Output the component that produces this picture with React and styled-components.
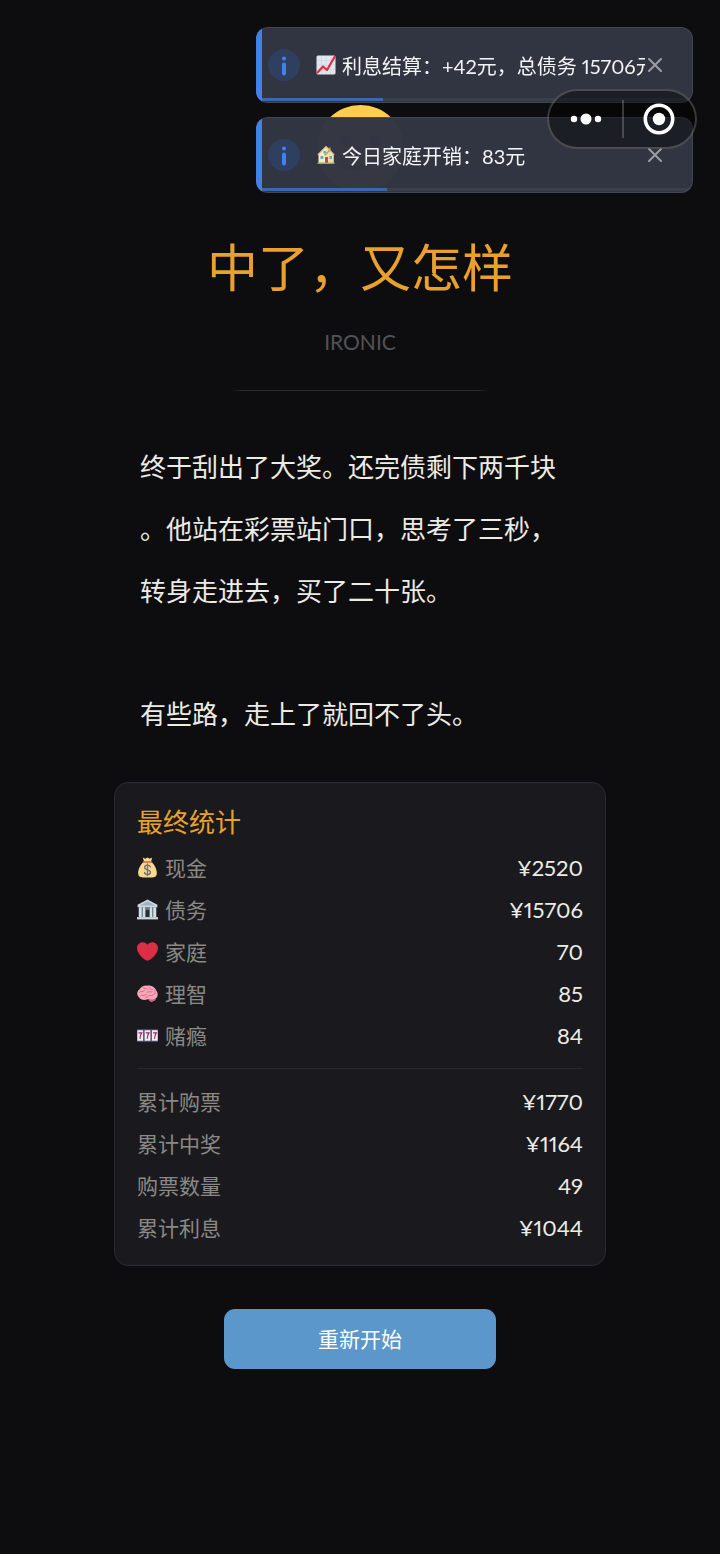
import React, { useState } from "react";
import styled, { createGlobalStyle } from "styled-components";

const GlobalStyle = createGlobalStyle`
  * {
    box-sizing: border-box;
  }

  body {
    margin: 0;
    background: #0d0d0f;
    color: #ecebe6;
    font-family: Lato, "Noto Sans CJK SC", sans-serif;
    font-variant-numeric: proportional-nums;
    text-spacing-trim: space-all;
  }

  button {
    font: inherit;
    border: none;
    cursor: pointer;
  }
`;

const Page = styled.main`
  display: flex;
  flex-direction: column;
  align-items: center;
  min-height: 100vh;
  padding: 105px 114px 60px;
`;

const Face = styled.svg`
  width: 87px;
  height: 87px;
`;

const Title = styled.h1`
  margin: 40px 0 0;
  color: #e8a22c;
  font-size: 51px;
  font-weight: 400;
  line-height: 72px;
`;

const Subtitle = styled.div`
  margin-top: 22px;
  color: #525254;
  font-size: 21px;
  line-height: 32px;
`;

const Rule = styled.hr`
  width: 260px;
  height: 1px;
  margin: 32px 0 0;
  border: none;
  background: linear-gradient(90deg, transparent, #2c2c2f 5%, #2c2c2f 95%, transparent);
`;

const Story = styled.div`
  width: 100%;
  margin-top: 45px;
  padding: 0 26px;
  font-size: 26px;
  line-height: 62px;
  line-break: anywhere;

  p {
    margin: 0 0 61px;
  }

  p:last-child {
    margin: 0;
  }
`;

const Card = styled.section`
  width: 100%;
  margin-top: 37px;
  padding: 19px 22px 17px;
  background: #1a1a1e;
  border: 1px solid #2b2b2f;
  border-radius: 14px;
`;

const CardTitle = styled.h2`
  margin: 0;
  color: #e8a22c;
  font-size: 26px;
  font-weight: 400;
  line-height: 40px;
`;

const StatList = styled.dl`
  margin: 0;
  padding: ${({ $divided }) => ($divided ? "11px 0 0" : "4px 0 12px")};
  border-top: ${({ $divided }) => ($divided ? "1px solid #2b2b2f" : "none")};
`;

const StatRow = styled.div`
  display: flex;
  align-items: center;
  justify-content: space-between;
  height: 42px;
`;

const StatLabel = styled.dt`
  display: flex;
  align-items: center;
  gap: 7px;
  color: #8b8985;
  font-size: 21px;
`;

const StatValue = styled.dd`
  margin: 0;
  font-size: 22px;
`;

const Emoji = styled.svg`
  flex: none;
  width: ${({ $size }) => $size || 21}px;
  height: ${({ $size }) => $size || 21}px;
`;

const RestartButton = styled.button`
  min-width: 272px;
  height: 60px;
  margin-top: 43px;
  padding: 0 20px 3px;
  color: #fff;
  background: #5b97ca;
  border-radius: 11px;
  font-size: 21px;
`;

const ToastStack = styled.div`
  position: fixed;
  top: 27px;
  right: 27px;
  display: flex;
  flex-direction: column;
  gap: 14px;
  width: 437px;
  max-width: calc(100vw - 54px);
`;

const ToastBox = styled.div`
  position: relative;
  display: flex;
  align-items: center;
  height: 76px;
  padding: 0 28px 0 12px;
  overflow: hidden;
  background: rgba(50, 54, 67, 0.985);
  border-radius: 12px;
  box-shadow: inset 0 0 0 1px rgba(255, 255, 255, 0.09);

  &::before {
    content: "";
    position: absolute;
    top: 0;
    bottom: 0;
    left: 0;
    width: 6px;
    background: #4381ea;
  }
`;

const InfoIcon = styled.svg`
  flex: none;
  width: 32px;
  height: 32px;
  margin-right: 16px;
`;

const ToastText = styled.div`
  display: flex;
  flex: 1;
  align-items: center;
  gap: 6px;
  overflow: hidden;
  color: #f3f4f6;
  font-size: 20px;
  white-space: nowrap;
`;

const CloseButton = styled.button`
  flex: none;
  display: flex;
  align-items: center;
  justify-content: center;
  width: 20px;
  height: 28px;
  padding: 0;
  background: none;
`;

const Progress = styled.div`
  position: absolute;
  right: 0;
  bottom: 2px;
  left: 6px;
  height: 3px;
  background: rgba(255, 255, 255, 0.05);

  div {
    height: 100%;
    background: #3f66ac;
  }
`;

const Capsule = styled.div`
  position: fixed;
  top: 89px;
  right: 23px;
  display: flex;
  align-items: center;
  width: 150px;
  height: 60px;
  background: rgba(0, 0, 0, 0.42);
  border: 2px solid rgba(255, 255, 255, 0.2);
  border-radius: 30px;
`;

const CapsuleButton = styled.button`
  display: flex;
  flex: 1;
  align-items: center;
  justify-content: center;
  height: 100%;
  padding: 0;
  background: none;

  & + & {
    position: relative;
  }

  & + &::before {
    content: "";
    position: absolute;
    left: 0;
    width: 2px;
    height: 38px;
    background: rgba(255, 255, 255, 0.2);
  }
`;

const ChartEmoji = () => (
  <Emoji viewBox="0 0 20 20" $size={20} aria-hidden="true">
    <rect x="0.5" y="0.5" width="19" height="19" rx="1.5" fill="#e1e8ed" />
    <path d="M5.5 1v18M10 1v18M14.5 1v18M1 5.500h18M1 10h18M1 14.500h18" stroke="#c6d3de" strokeWidth="0.6" />
    <path d="M1.500 17.500l5.500-6 4 3.500L18.500 2" fill="none" stroke="#dd2e44" strokeWidth="2.200" strokeLinecap="round" strokeLinejoin="round" />
  </Emoji>
);

const HouseEmoji = () => (
  <Emoji viewBox="0 0 20 20" $size={20} aria-hidden="true">
    <path d="M2.500 9L7 4.500 10 1.500 17.500 9v9.500h-15z" fill="#f8ecc0" />
    <path d="M10 1.500L17.500 9v9.500H10z" fill="#f3dfa6" />
    <path d="M12.500 2.500h2.200v4h-2.200z" fill="#a98c5c" />
    <path d="M1.800 9.800L10 1.500l8.200 8.300" fill="none" stroke="#dcc48a" strokeWidth="1.200" />
    <path d="M8.500 10.500L13 6" stroke="#b59a5f" strokeWidth="1.200" />
    <rect x="9" y="12" width="3" height="6" fill="#b5504a" />
    <path d="M4.500 11h2.800v3H4.500zM13.500 11h2.500v3h-2.500zM7.500 6h2.500v2.500H7.500z" fill="#6aa5cf" />
    <path d="M1.500 17.500h17v1.500h-17z" fill="#8fae55" />
  </Emoji>
);

const MoneyEmoji = () => (
  <Emoji viewBox="0 0 36 36" aria-hidden="true">
    <path d="M10 1l4 2 4-2 4 2 4-2-2 7c5 3 10 12 10 19 0 6-3 8-8 8H10c-5 0-8-2-8-8 0-7 5-16 10-19z" fill="#fdd888" />
    <path d="M11 8.500h14" stroke="#bf6952" strokeWidth="2.500" strokeLinecap="round" />
    <path d="M23 17c-1-2-3-3-5-3-3 0-5 1.500-5 4 0 5.500 10 2.500 10 8 0 2.500-2 4-5 4s-5-1.500-5-3.500M18 12v20" fill="none" stroke="#67757f" strokeWidth="2.300" strokeLinecap="round" />
  </Emoji>
);

const BankEmoji = () => (
  <Emoji viewBox="0 0 36 36" aria-hidden="true">
    <path d="M4 14h28v18H4z" fill="#66757f" />
    <path d="M18 1L1 10v4h34v-4z" fill="#ccd6dd" />
    <path d="M18 4L5 11h26z" fill="#9fb3c1" />
    <path d="M3 14h5v17H3zM10 14h4v17h-4zM22 14h4v17h-4zM28 14h5v17h-5z" fill="#d5dfe6" />
    <path d="M15 19h6v12h-6z" fill="#292f33" />
    <path d="M0 31h36v4H0z" fill="#ccd6dd" />
  </Emoji>
);

const HeartEmoji = () => (
  <Emoji viewBox="0 0 36 36" aria-hidden="true">
    <path d="M36 11.800c0-5.400-4.400-9.800-9.800-9.800-3.400 0-6.500 1.800-8.200 4.500C16.300 3.800 13.200 2 9.800 2 4.400 2 0 6.400 0 11.800c0 .8.100 1.500.3 2.200C1.700 22.600 11.200 31.600 18 34c6.800-2.400 16.300-11.400 17.700-20 .2-.7.300-1.400.3-2.200z" fill="#dd2e44" />
  </Emoji>
);

const BrainEmoji = () => (
  <Emoji viewBox="0 0 36 36" aria-hidden="true">
    <path d="M19 28c2 4 7 6 9 3 4 0 5-4 3-7z" fill="#dd5c83" />
    <path d="M3 24C-1 20 0 14 4 11 7 6 12 4 17 4.500 24 3 31 7 33 13c4 5 3 12-2 14-4 2-8 1-11 0-4 3-14 3-17-3z" fill="#f7a9bb" />
    <path d="M4 16c3-3 6 0 9-3M10 8c2 2 6 0 8 3M22 7c-2 3 2 5 5 4M17 16c3-3 6 1 9-1M6 22c3-3 6 1 10-2M20 22c3-2 7 1 10-3M14 26c1-2 4-2 5-3M30 12c2 2 0 4 1 6" fill="none" stroke="#dd5c83" strokeWidth="1.500" strokeLinecap="round" />
  </Emoji>
);

const SlotEmoji = () => (
  <Emoji viewBox="0 0 36 36" aria-hidden="true">
    <path d="M0 7h36v22H0z" fill="#4a4d66" />
    {[0, 12.5, 25].map((x) => (
      <g key={x} transform={`translate(${x} 0)`}>
        <rect x="0.500" y="9" width="10" height="18" fill="#f1edf5" />
        <path d="M2.500 13.500h5.500c-1.800 3-2.800 6-3 10" fill="none" stroke="#a0235f" strokeWidth="2" />
      </g>
    ))}
  </Emoji>
);

const mainStats = [
  { icon: <MoneyEmoji />, label: "现金", value: "¥2520" },
  { icon: <BankEmoji />, label: "债务", value: "¥15706" },
  { icon: <HeartEmoji />, label: "家庭", value: "70" },
  { icon: <BrainEmoji />, label: "理智", value: "85" },
  { icon: <SlotEmoji />, label: "赌瘾", value: "84" },
];

const totalStats = [
  { label: "累计购票", value: "¥1770" },
  { label: "累计中奖", value: "¥1164" },
  { label: "购票数量", value: "49" },
  { label: "累计利息", value: "¥1044" },
];

const initialToasts = [
  { id: 1, icon: <ChartEmoji />, text: "利息结算：+42元，总债务 15706元", progress: 28 },
  { id: 2, icon: <HouseEmoji />, text: "今日家庭开销：83元", progress: 29 },
];

function Stats({ items, divided }) {
  return (
    <StatList $divided={divided}>
      {items.map(({ icon, label, value }) => (
        <StatRow key={label}>
          <StatLabel>
            {icon}
            {label}
          </StatLabel>
          <StatValue>{value}</StatValue>
        </StatRow>
      ))}
    </StatList>
  );
}

function Toast({ icon, text, progress, onClose }) {
  return (
    <ToastBox role="status">
      <InfoIcon viewBox="0 0 32 32" aria-hidden="true">
        <circle cx="16" cy="16" r="16" fill="#2f3f60" />
        <circle cx="16" cy="9.500" r="2" fill="#4381ea" />
        <path d="M16 15.500v9" stroke="#4381ea" strokeWidth="4" strokeLinecap="round" />
      </InfoIcon>
      <ToastText>
        {icon}
        {text}
      </ToastText>
      <CloseButton type="button" aria-label="关闭" onClick={onClose}>
        <svg width="14" height="14" viewBox="0 0 14 14">
          <path d="M1 1l12 12M13 1L1 13" stroke="#9b9da4" strokeWidth="2" strokeLinecap="round" />
        </svg>
      </CloseButton>
      <Progress>
        <div style={{ width: `${progress}%` }} />
      </Progress>
    </ToastBox>
  );
}

function App() {
  const [toasts, setToasts] = useState(initialToasts);

  return (
    <>
      <GlobalStyle />
      <Page>
        <Face viewBox="0 0 36 36" aria-hidden="true">
          <circle cx="18" cy="18" r="18" fill="#ffcc4d" />
          <circle cx="12" cy="15" r="2.500" fill="#664500" />
          <circle cx="24" cy="15" r="2.500" fill="#664500" />
          <path d="M11 25c5 2 10 1 14-3" fill="none" stroke="#664500" strokeWidth="2" strokeLinecap="round" />
        </Face>
        <Title>中了，又怎样</Title>
        <Subtitle>IRONIC</Subtitle>
        <Rule />
        <Story>
          <p>终于刮出了大奖。还完债剩下两千块。他站在彩票站门口，思考了三秒，转身走进去，买了二十张。</p>
          <p>有些路，走上了就回不了头。</p>
        </Story>
        <Card>
          <CardTitle>最终统计</CardTitle>
          <Stats items={mainStats} />
          <Stats items={totalStats} divided />
        </Card>
        <RestartButton type="button">重新开始</RestartButton>
      </Page>

      <ToastStack>
        {toasts.map((toast) => (
          <Toast
            key={toast.id}
            {...toast}
            onClose={() => setToasts(toasts.filter((t) => t.id !== toast.id))}
          />
        ))}
      </ToastStack>

      <Capsule>
        <CapsuleButton type="button" aria-label="更多">
          <svg width="32" height="12" viewBox="0 0 32 12" fill="#fff">
            <circle cx="4" cy="6" r="3.200" />
            <circle cx="16" cy="6" r="5.500" />
            <circle cx="28" cy="6" r="3.200" />
          </svg>
        </CapsuleButton>
        <CapsuleButton type="button" aria-label="退出">
          <svg width="32" height="32" viewBox="0 0 32 32">
            <circle cx="16" cy="16" r="13.700" fill="none" stroke="#fff" strokeWidth="3.600" />
            <circle cx="16" cy="16" r="6.200" fill="#fff" />
          </svg>
        </CapsuleButton>
      </Capsule>
    </>
  );
}

export default App;
